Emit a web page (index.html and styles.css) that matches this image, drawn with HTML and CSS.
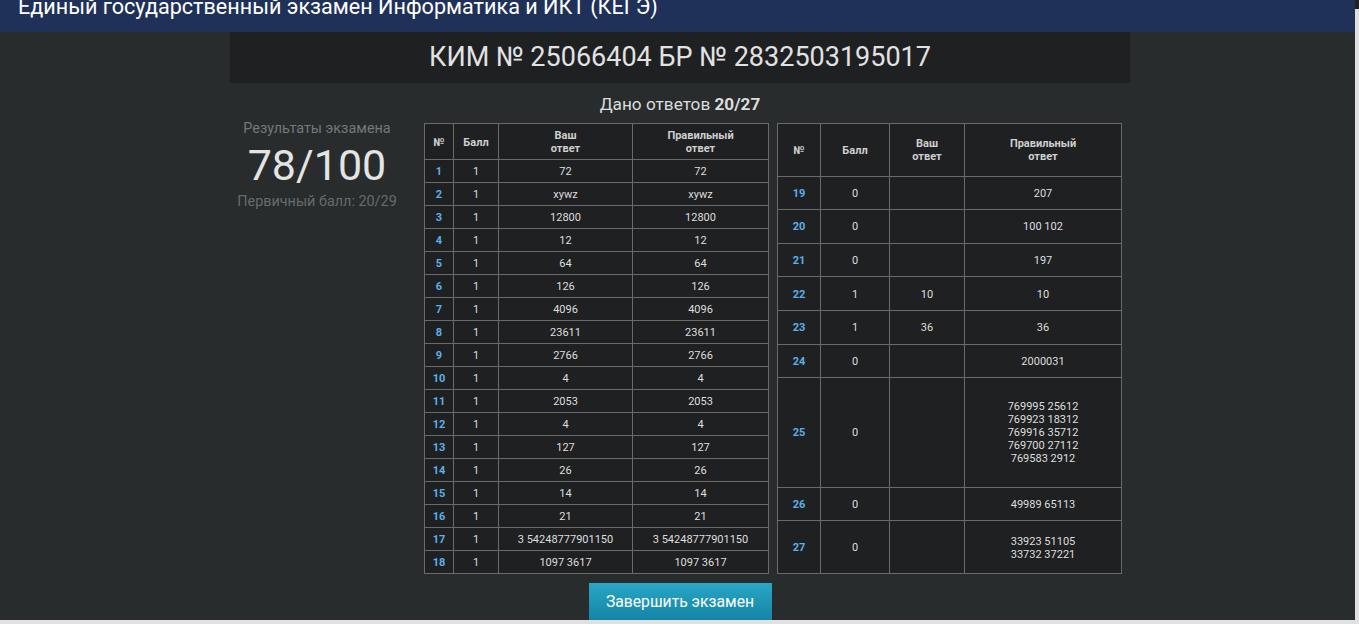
FILE: index.html
```html
<!DOCTYPE html>
<html lang="ru">
<head>
<meta charset="utf-8">
<title>КЕГЭ — результаты</title>
<link rel="stylesheet" href="styles.css">
</head>
<body>
<div class="screen">
  <div class="viewport">
    <header class="topbar"><h1 class="topbar-title">Единый государственный экзамен Информатика и ИКТ (КЕГЭ)</h1></header>
    <main class="content">
      <div class="container">
        <div class="kim">КИМ № 25066404 БР № 2832503195017</div>
        <div class="answered">Дано ответов <b>20/27</b></div>
        <div class="results">
          <div class="score">
            <div class="score-label">Результаты экзамена</div>
            <div class="score-value">78/100</div>
            <div class="score-primary">Первичный балл: 20/29</div>
          </div>
          <div class="tbl-wrap tbl-a">
            <table class="res">
              <colgroup><col class="c1"><col class="c2"><col class="c3"><col class="c4"></colgroup>
              <tbody>
                <tr><th>№</th><th>Балл</th><th>Ваш<br>ответ</th><th>Правильный<br>ответ</th></tr>
                <tr><td class="n">1</td><td>1</td><td>72</td><td>72</td></tr>
                <tr><td class="n">2</td><td>1</td><td>xywz</td><td>xywz</td></tr>
                <tr><td class="n">3</td><td>1</td><td>12800</td><td>12800</td></tr>
                <tr><td class="n">4</td><td>1</td><td>12</td><td>12</td></tr>
                <tr><td class="n">5</td><td>1</td><td>64</td><td>64</td></tr>
                <tr><td class="n">6</td><td>1</td><td>126</td><td>126</td></tr>
                <tr><td class="n">7</td><td>1</td><td>4096</td><td>4096</td></tr>
                <tr><td class="n">8</td><td>1</td><td>23611</td><td>23611</td></tr>
                <tr><td class="n">9</td><td>1</td><td>2766</td><td>2766</td></tr>
                <tr><td class="n">10</td><td>1</td><td>4</td><td>4</td></tr>
                <tr><td class="n">11</td><td>1</td><td>2053</td><td>2053</td></tr>
                <tr><td class="n">12</td><td>1</td><td>4</td><td>4</td></tr>
                <tr><td class="n">13</td><td>1</td><td>127</td><td>127</td></tr>
                <tr><td class="n">14</td><td>1</td><td>26</td><td>26</td></tr>
                <tr><td class="n">15</td><td>1</td><td>14</td><td>14</td></tr>
                <tr><td class="n">16</td><td>1</td><td>21</td><td>21</td></tr>
                <tr><td class="n">17</td><td>1</td><td>3 54248777901150</td><td>3 54248777901150</td></tr>
                <tr><td class="n">18</td><td>1</td><td>1097 3617</td><td>1097 3617</td></tr>
              </tbody>
            </table>
          </div>
          <div class="tbl-wrap tbl-b">
            <table class="res">
              <colgroup><col class="d1"><col class="d2"><col class="d3"><col class="d4"></colgroup>
              <tbody>
                <tr><th>№</th><th>Балл</th><th>Ваш<br>ответ</th><th>Правильный<br>ответ</th></tr>
                <tr><td class="n">19</td><td>0</td><td></td><td>207</td></tr>
                <tr><td class="n">20</td><td>0</td><td></td><td>100 102</td></tr>
                <tr><td class="n">21</td><td>0</td><td></td><td>197</td></tr>
                <tr><td class="n">22</td><td>1</td><td>10</td><td>10</td></tr>
                <tr><td class="n">23</td><td>1</td><td>36</td><td>36</td></tr>
                <tr><td class="n">24</td><td>0</td><td></td><td>2000031</td></tr>
                <tr><td class="n">25</td><td>0</td><td></td><td>769995 25612<br>769923 18312<br>769916 35712<br>769700 27112<br>769583 2912</td></tr>
                <tr><td class="n">26</td><td>0</td><td></td><td>49989 65113</td></tr>
                <tr><td class="n">27</td><td>0</td><td></td><td>33923 51105<br>33732 37221</td></tr>
              </tbody>
            </table>
          </div>
        </div>
        <div class="actions"><button class="finish" type="button">Завершить экзамен</button></div>
      </div>
    </main>
  </div>
  <div class="vscroll"><div class="vscroll-cap"></div></div>
  <div class="hscroll"></div>
  <div class="corner"></div>
</div>
</body>
</html>
```

FILE: styles.css
```css
html, body {
  margin: 0;
  padding: 0;
  height: 100%;
  overflow: hidden;
  background: #282c2d;
  font-family: Roboto, "Noto Sans", "Liberation Sans", sans-serif;
}

.screen {
  display: grid;
  grid-template-columns: 1355px 4px;
  grid-template-rows: 620px 4px;
  width: 1359px;
  height: 624px;
}

.viewport {
  overflow: hidden;
  background: #282c2d;
  display: flex;
  flex-direction: column;
}

.topbar {
  height: 32px;
  flex: 0 0 32px;
  background: #1f3159;
  overflow: hidden;
}

.topbar-title {
  margin: -6px 0 0 18px;
  font-size: 21.6px;
  line-height: 26px;
  font-weight: 400;
  color: #ffffff;
  white-space: nowrap;
}

.content {
  flex: 1;
}

.container {
  width: 900px;
  margin: 0 auto 0 230px;
  display: flex;
  flex-direction: column;
}

.kim {
  height: 51px;
  background: #1f2022;
  color: #e2e2e2;
  font-size: 27px;
  line-height: 51px;
  text-align: center;
}

.answered {
  margin-top: 10px;
  height: 22px;
  line-height: 22px;
  font-size: 17.2px;
  color: #dcdcdc;
  text-align: center;
}

.answered b {
  font-weight: 700;
}

.results {
  margin-top: 8px;
  display: flex;
  align-items: stretch;
}

.score {
  width: 174px;
  margin-right: 20px;
  text-align: center;
  margin-top: -3px;
}

.score-label {
  font-size: 14.4px;
  line-height: 18px;
  color: #74787a;
}

.score-value {
  font-size: 43px;
  line-height: 55px;
  color: #e4e4e4;
  font-weight: 400;
}

.score-primary {
  font-size: 14.4px;
  line-height: 18px;
  color: #676b6d;
}

.tbl-wrap {
  width: 344px;
}

.tbl-b {
  margin-left: 9px;
}

.res {
  width: 100%;
  height: 100%;
  border-collapse: collapse;
  table-layout: fixed;
  background: #1f2022;
  font-size: 11px;
  line-height: 13px;
  color: #dedede;
}

.res th,
.res td {
  border: 1px solid #6a6a6a;
  padding: 5px 3px 4px;
  text-align: center;
  vertical-align: middle;
}

.res th {
  font-weight: 700;
  color: #cfcfcf;
}

.res td.n {
  color: #5cb0e8;
  font-weight: 700;
}

.c1 { width: 29px; }
.c2 { width: 45px; }
.c3 { width: 134px; }
.c4 { width: 136px; }

.d1 { width: 43px; }
.d2 { width: 69px; }
.d3 { width: 75px; }
.d4 { width: 157px; }

.actions {
  display: flex;
  justify-content: center;
  margin-top: 9px;
}

.finish {
  width: 183px;
  height: 40px;
  border: 0;
  border-radius: 0;
  background: linear-gradient(#2aa6c6, #1282a3);
  color: #ffffff;
  font-family: Roboto, "Noto Sans", "Liberation Sans", sans-serif;
  font-size: 15.7px;
  padding: 0 0 3px;
}

.vscroll {
  background: #e0e0e0;
  display: flex;
  flex-direction: column;
}

.vscroll-cap {
  height: 9px;
  background: #202124;
}

.hscroll {
  background: #e0e0e0;
}

.corner {
  background: #e0e0e0;
}
```
